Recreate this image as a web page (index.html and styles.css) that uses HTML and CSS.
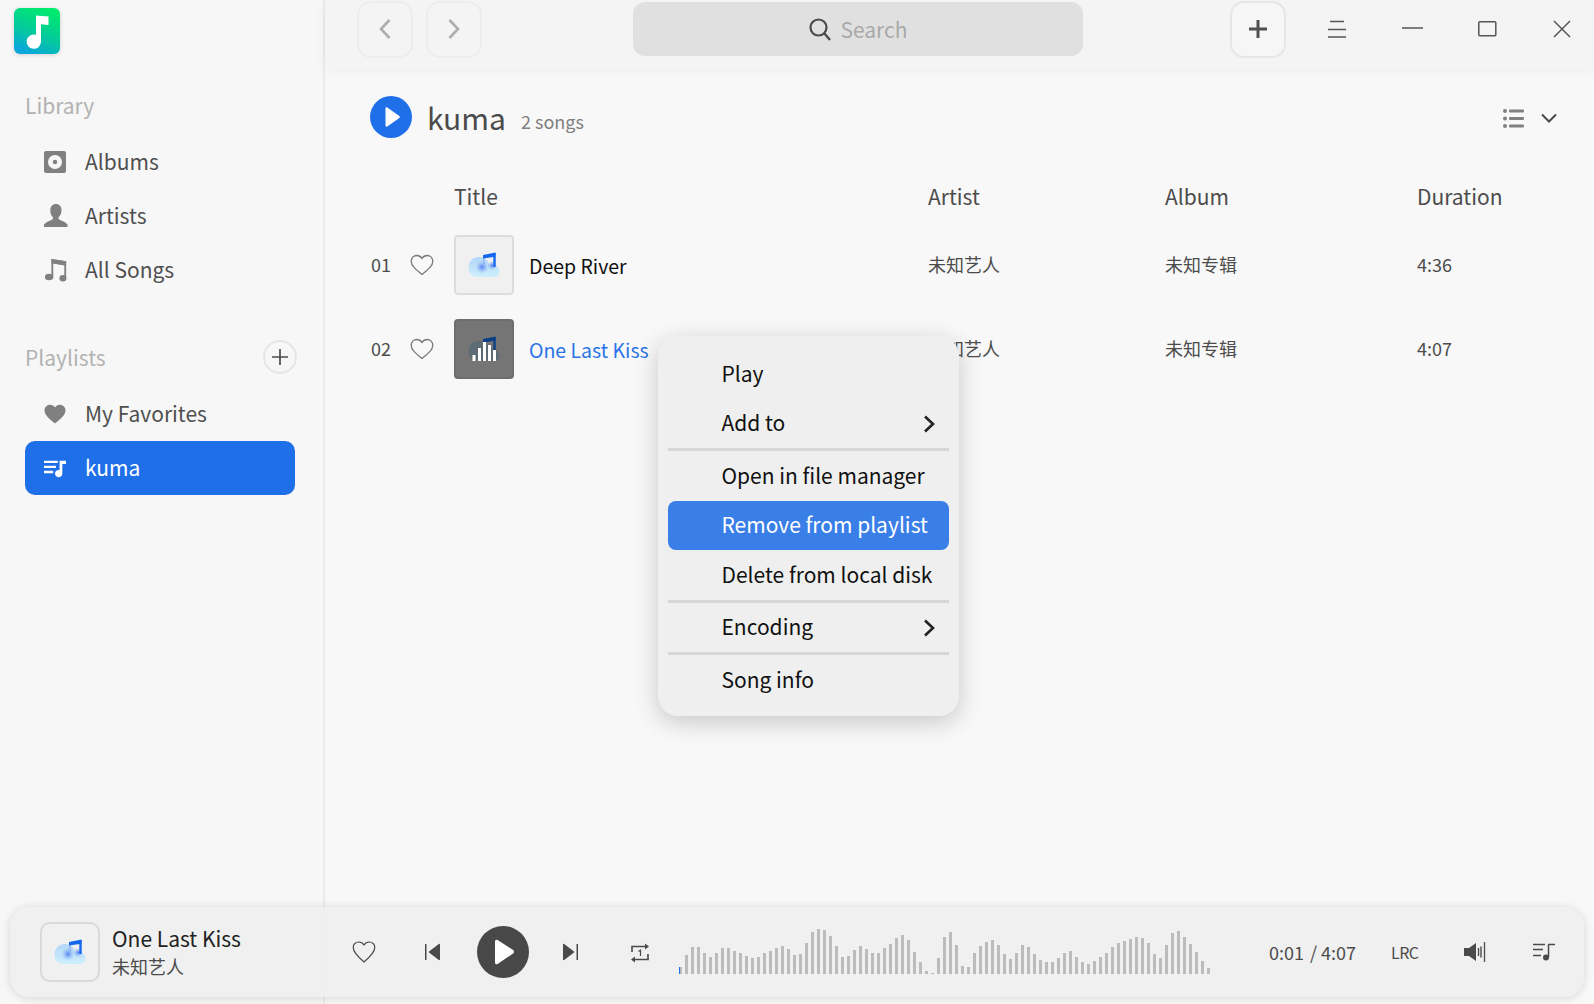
FILE: index.html
```html
<!DOCTYPE html>
<html lang="en">
<head>
<meta charset="utf-8">
<title>Music</title>
<link rel="stylesheet" href="styles.css">
</head>
<body>
<svg class="defs" width="0" height="0" aria-hidden="true">
  <defs>
    <linearGradient id="cloudFill" x1="0" y1="0" x2="0" y2="1">
      <stop offset="0" stop-color="#b4d6fa"/>
      <stop offset="1" stop-color="#cdeffb"/>
    </linearGradient>
    <radialGradient id="cloudSpot">
      <stop offset="0" stop-color="#5583f0"/>
      <stop offset=".4" stop-color="#7ba4f4" stop-opacity=".7"/>
      <stop offset="1" stop-color="#a8cdf8" stop-opacity="0"/>
    </radialGradient>
    <linearGradient id="logoFill" x1="0.75" y1="0" x2="0.35" y2="1">
      <stop offset="0" stop-color="#00ec6a"/>
      <stop offset=".6" stop-color="#04c8a0"/>
      <stop offset="1" stop-color="#0aa6dc"/>
    </linearGradient>
    <symbol id="heart" viewBox="0 0 24 22">
      <path d="M12 20.500C5 15 1.200 11.600 1.200 7.200 1.200 3.900 3.700 1.500 6.800 1.500c2.100 0 4 1.100 5.200 3 1.200-1.900 3.100-3 5.200-3 3.100 0 5.600 2.400 5.600 5.700 0 4.400-3.800 7.800-10.800 13.300z" fill="none" stroke="currentColor" stroke-width="1.300"/>
    </symbol>
    <symbol id="cloud" viewBox="0 0 32 26">
      <path d="M9 25C3.500 25 .5 20.500.5 15.500.5 9.500 5 5 11 5c5.500 0 9.500 3.500 10.500 8.500.8-.3 1.500-.5 2.500-.5 4.500 0 7.500 3 7.500 6.500 0 3.500-3 5.500-6 5.500z" fill="url(#cloudFill)"/>
      <circle cx="14" cy="15" r="7" fill="url(#cloudSpot)"/>
      <circle cx="24" cy="13.500" r="5" fill="url(#cloudSpot)"/>
      <path d="M16 4.500v8" stroke="#7fa8f0" stroke-width="1"/>
      <path d="M15 3 27.500.5v4.300L15 6.500z" fill="#1468ee"/>
      <path d="M26.500 1v14" stroke="#1468ee" stroke-width="2.400"/>
    </symbol>
  </defs>
</svg>

<div class="app">
  <aside class="sidebar">
    <svg class="logo" viewBox="0 0 46 46">
      <rect width="46" height="46" rx="6" fill="url(#logoFill)"/>
      <path d="M22 7.500 34.500 8.500V17L27 16.300V33.500A7.200 7.200 0 1 1 22 26.800z" fill="#fff"/>
    </svg>

    <div class="label label-library">Library</div>
    <nav class="nav">
      <a class="nav-item">
        <svg class="nav-icon" viewBox="0 0 22 22"><path fill-rule="evenodd" d="M2 0h18a2 2 0 0 1 2 2v18a2 2 0 0 1-2 2H2a2 2 0 0 1-2-2V2a2 2 0 0 1 2-2zm9 4a7 7 0 1 0 0 14 7 7 0 0 0 0-14zm0 4.800a2.200 2.200 0 1 1 0 4.400 2.200 2.200 0 0 1 0-4.400z" fill="#808080"/></svg>
        <span>Albums</span>
      </a>
      <a class="nav-item">
        <svg class="nav-icon nav-icon-wide" viewBox="0 0 24 24"><path d="M12 0c3.400 0 5.500 2.600 5.500 6 0 3-1 5.500-2.700 7-.6.500-.4 2 .4 2.500 2.300 1.400 6.300 2.300 8.300 5v2.500H0V20.500c2-2.700 6-3.600 8.300-5 .8-.5 1-2 .4-2.500C7 11.500 6.300 9 6.300 6 6.300 2.600 8.600 0 12 0z" fill="#808080"/></svg>
        <span>Artists</span>
      </a>
      <a class="nav-item">
        <svg class="nav-icon nav-icon-wide" viewBox="0 0 24 26"><path d="M7 1 23 3.500V21h-2V8L9 6V22H7z" fill="#808080"/><path d="M7 1 23 3.500V8L7 5.500z" fill="#808080"/><ellipse cx="4.500" cy="20.500" rx="4.500" ry="3.500" fill="#808080"/><ellipse cx="19.500" cy="22" rx="3.800" ry="3.500" fill="#808080"/></svg>
        <span>All Songs</span>
      </a>
    </nav>

    <div class="label label-playlists">
      <span>Playlists</span>
      <button class="round-add">
        <svg viewBox="0 0 16 16" width="16" height="16"><path d="M8 0v16M0 8h16" stroke="#4c4c4c" stroke-width="1.700"/></svg>
      </button>
    </div>
    <nav class="nav">
      <a class="nav-item">
        <svg class="nav-icon nav-icon-heart" viewBox="0 0 24 22"><path d="M12 21.500C4.500 15.500.5 12 .5 7 .5 3.500 3.300.8 6.700.8c2.100 0 4.100 1.100 5.300 3 1.200-1.900 3.200-3 5.300-3 3.400 0 6.200 2.700 6.200 6.200 0 5-4 8.500-11.500 14.500z" fill="#808080"/></svg>
        <span>My Favorites</span>
      </a>
      <a class="nav-item nav-item-active">
        <svg class="nav-icon" viewBox="0 0 24 22"><path d="M0 3h15v2.600H0zM0 8.500h13v2.600H0zM0 14h10v2.600H0z" fill="#fff"/><path d="M17 3h7v3.500h-4V17a4 4 0 1 1-3-3.800z" fill="#fff"/></svg>
        <span>kuma</span>
      </a>
    </nav>
  </aside>

  <main class="content">
    <header class="titlebar">
      <button class="tool-btn tool-btn-dim">
        <svg viewBox="0 0 14 24" width="14" height="24"><path d="M11.500 3 3 12l8.500 9" fill="none" stroke="#aeaeae" stroke-width="2.600"/></svg>
      </button>
      <button class="tool-btn tool-btn-dim tool-btn-next">
        <svg viewBox="0 0 14 24" width="14" height="24"><path d="M2.500 3 11 12l-8.500 9" fill="none" stroke="#aeaeae" stroke-width="2.600"/></svg>
      </button>
      <div class="search">
        <svg viewBox="0 0 24 24" width="24" height="24"><circle cx="10.500" cy="10.500" r="8" fill="none" stroke="#4a4a4a" stroke-width="2.200"/><path d="m16 16 6 7" stroke="#4a4a4a" stroke-width="2.400"/></svg>
        <span>Search</span>
      </div>
      <button class="tool-btn tool-btn-add">
        <svg viewBox="0 0 20 20" width="20" height="20"><path d="M10 1v18M1 10h18" stroke="#505050" stroke-width="3"/></svg>
      </button>
      <div class="win-btn win-menu"><svg viewBox="0 0 20 18" width="20" height="18"><path d="M3 1.500h14M1 9.500h18M1 17h18" stroke="#555" stroke-width="1.500"/></svg></div>
      <div class="win-btn win-min"><svg viewBox="0 0 22 4" width="22" height="4"><path d="M0 1h21" stroke="#555" stroke-width="1.500"/></svg></div>
      <div class="win-btn win-max"><svg viewBox="0 0 19 16" width="19" height="16"><rect x=".8" y=".8" width="17" height="14" rx="1" fill="none" stroke="#555" stroke-width="1.500"/></svg></div>
      <div class="win-btn win-close"><svg viewBox="0 0 18 18" width="18" height="18"><path d="m1 1 16 16M17 1 1 17" stroke="#555" stroke-width="1.500"/></svg></div>
    </header>

    <section class="playlist-head">
      <svg class="big-play" viewBox="0 0 42 42"><circle cx="21" cy="21" r="21" fill="#1f6fe8"/><path d="M15.500 12.500c0-1 1-1.500 1.800-1l12 8.500c.8.500.8 1.500 0 2l-12 8.500c-.8.500-1.800 0-1.800-1z" fill="#fff"/></svg>
      <h1 class="playlist-name">kuma</h1>
      <span class="playlist-count">2 songs</span>
      <svg class="view-list" viewBox="0 0 21 19"><g fill="#808080"><circle cx="2" cy="2" r="2"/><circle cx="2" cy="9.500" r="2"/><circle cx="2" cy="17" r="2"/><rect x="6" y=".5" width="15" height="3" rx="1"/><rect x="6" y="8" width="15" height="3" rx="1"/><rect x="6" y="15.500" width="15" height="3" rx="1"/></g></svg>
      <svg class="view-chevron" viewBox="0 0 16 10"><path d="m1 1.500 7 7 7-7" fill="none" stroke="#4a4a4a" stroke-width="2"/></svg>
    </section>

    <div class="track-row track-head">
      <span></span><span></span>
      <span>Title</span><span>Artist</span><span>Album</span><span>Duration</span>
    </div>

    <div class="track-row track">
      <span class="track-no">01</span>
      <svg class="track-heart"><use href="#heart"/></svg>
      <div class="track-title">
        <div class="thumb"><svg class="thumb-art"><use href="#cloud"/></svg></div>
        <span>Deep River</span>
      </div>
      <span class="track-meta">未知艺人</span>
      <span class="track-meta">未知专辑</span>
      <span class="track-meta">4:36</span>
    </div>

    <div class="track-row track">
      <span class="track-no">02</span>
      <svg class="track-heart"><use href="#heart"/></svg>
      <div class="track-title track-title-active">
        <div class="thumb thumb-playing">
          <svg class="thumb-art" viewBox="0 0 32 26">
            <path d="M9 25C3.500 25 .5 20.500.5 15.500.5 9.500 5 5 11 5c5.500 0 9.500 3.500 10.500 8.500.8-.3 1.500-.5 2.500-.5 4.500 0 7.500 3 7.500 6.500 0 3.500-3 5.500-6 5.500z" fill="#5d6b75"/>
            <path d="M15 3 27.500.5v4.300L15 6.500z" fill="#0c3f86"/><path d="M26.500 1v14" stroke="#0c3f86" stroke-width="2.400"/>
            <path d="M4.500 19h3v6h-3zM10 12h3v13h-3zM15 6h3v19h-3zM20 9h3v16h-3zM25 14h3v11h-3z" fill="#fff"/>
          </svg>
        </div>
        <span>One Last Kiss</span>
      </div>
      <span class="track-meta">未知艺人</span>
      <span class="track-meta">未知专辑</span>
      <span class="track-meta">4:07</span>
    </div>
  </main>

  <ul class="menu">
    <li class="menu-item">Play</li>
    <li class="menu-item">Add to
      <svg class="menu-arrow" viewBox="0 0 12 18"><path d="m2 1.500 8 7.500-8 7.500" fill="none" stroke="#222" stroke-width="2.600"/></svg>
    </li>
    <li class="menu-sep"></li>
    <li class="menu-item">Open in file manager</li>
    <li class="menu-item menu-item-active">Remove from playlist</li>
    <li class="menu-item">Delete from local disk</li>
    <li class="menu-sep"></li>
    <li class="menu-item">Encoding
      <svg class="menu-arrow" viewBox="0 0 12 18"><path d="m2 1.500 8 7.500-8 7.500" fill="none" stroke="#222" stroke-width="2.600"/></svg>
    </li>
    <li class="menu-sep"></li>
    <li class="menu-item">Song info</li>
  </ul>

  <footer class="player">
    <div class="now">
      <div class="now-cover"><svg class="now-art"><use href="#cloud"/></svg></div>
      <div class="now-text">
        <div class="now-title">One Last Kiss</div>
        <div class="now-artist">未知艺人</div>
      </div>
    </div>
    <svg class="ctl ctl-heart" viewBox="0 0 24 24"><path d="M12 22C5 16 1.200 12 1.200 7.500 1.200 4.300 3.700 2 6.800 2c2.100 0 4 1.100 5.200 3 1.200-1.900 3.100-3 5.200-3 3.100 0 5.600 2.300 5.600 5.500C22.800 12 19 16 12 22z" fill="none" stroke="#4a4a4a" stroke-width="1.200"/></svg>
    <svg class="ctl ctl-prev" viewBox="0 0 16 18"><path d="M0 1h1.500v16H0z" fill="#4a4a4a"/><path d="M15 1.500v15c0 .6-.7 1-1.200.6L4 9.600c-.4-.3-.4-.9 0-1.200L13.800.9c.5-.4 1.200 0 1.200.6z" fill="#4a4a4a"/></svg>
    <svg class="ctl-play" viewBox="0 0 52 52"><circle cx="26" cy="26" r="26" fill="#484848"/><path d="M18 15.500c0-1.500 1.300-2.300 2.600-1.500l15.500 10c1.200.8 1.200 2.700 0 3.500L20.600 38c-1.300.8-2.600 0-2.600-1.500z" fill="#fff"/></svg>
    <svg class="ctl ctl-next" viewBox="0 0 16 18"><path d="M14.500 1H16v16h-1.500z" fill="#4a4a4a"/><path d="M1 1.500v15c0 .6.700 1 1.200.6L12 9.600c.4-.3.4-.9 0-1.200L2.200.9C1.700.5 1 .9 1 1.500z" fill="#4a4a4a"/></svg>
    <div class="ctl ctl-repeat">
      <svg viewBox="0 0 22 22" width="22" height="22"><path d="M3 10V4.500h14M19 12v5.500H5" fill="none" stroke="#4a4a4a" stroke-width="1.600"/><path d="m16 1.500 4 3-4 3zM6 14.500l-4 3 4 3z" fill="#4a4a4a"/><path d="M9.500 9.500l2-1.300V14" fill="none" stroke="#4a4a4a" stroke-width="1.200"/></svg>
    </div>
    <div class="wave">
      <i class="bar bar-played" style="height:7px"></i><i class="bar" style="height:19px"></i><i class="bar" style="height:27px"></i><i class="bar" style="height:27px"></i><i class="bar" style="height:21px"></i><i class="bar" style="height:17px"></i><i class="bar" style="height:21px"></i><i class="bar" style="height:26px"></i><i class="bar" style="height:26px"></i><i class="bar" style="height:23px"></i><i class="bar" style="height:21px"></i><i class="bar" style="height:18px"></i><i class="bar" style="height:16px"></i><i class="bar" style="height:17px"></i><i class="bar" style="height:21px"></i><i class="bar" style="height:23px"></i><i class="bar" style="height:26px"></i><i class="bar" style="height:28px"></i><i class="bar" style="height:25px"></i><i class="bar" style="height:19px"></i><i class="bar" style="height:20px"></i><i class="bar" style="height:31px"></i><i class="bar" style="height:42px"></i><i class="bar" style="height:45px"></i><i class="bar" style="height:44px"></i><i class="bar" style="height:38px"></i><i class="bar" style="height:28px"></i><i class="bar" style="height:17px"></i><i class="bar" style="height:18px"></i><i class="bar" style="height:24px"></i><i class="bar" style="height:28px"></i><i class="bar" style="height:25px"></i><i class="bar" style="height:21px"></i><i class="bar" style="height:21px"></i><i class="bar" style="height:26px"></i><i class="bar" style="height:30px"></i><i class="bar" style="height:36px"></i><i class="bar" style="height:39px"></i><i class="bar" style="height:34px"></i><i class="bar" style="height:22px"></i><i class="bar" style="height:12px"></i><i class="bar" style="height:3px"></i><i class="bar" style="height:1px"></i><i class="bar" style="height:16px"></i><i class="bar" style="height:37px"></i><i class="bar" style="height:42px"></i><i class="bar" style="height:29px"></i><i class="bar" style="height:8px"></i><i class="bar" style="height:7px"></i><i class="bar" style="height:21px"></i><i class="bar" style="height:28px"></i><i class="bar" style="height:32px"></i><i class="bar" style="height:34px"></i><i class="bar" style="height:29px"></i><i class="bar" style="height:20px"></i><i class="bar" style="height:15px"></i><i class="bar" style="height:21px"></i><i class="bar" style="height:29px"></i><i class="bar" style="height:27px"></i><i class="bar" style="height:20px"></i><i class="bar" style="height:14px"></i><i class="bar" style="height:12px"></i><i class="bar" style="height:12px"></i><i class="bar" style="height:16px"></i><i class="bar" style="height:21px"></i><i class="bar" style="height:23px"></i><i class="bar" style="height:17px"></i><i class="bar" style="height:12px"></i><i class="bar" style="height:10px"></i><i class="bar" style="height:13px"></i><i class="bar" style="height:17px"></i><i class="bar" style="height:21px"></i><i class="bar" style="height:27px"></i><i class="bar" style="height:31px"></i><i class="bar" style="height:33px"></i><i class="bar" style="height:35px"></i><i class="bar" style="height:37px"></i><i class="bar" style="height:36px"></i><i class="bar" style="height:31px"></i><i class="bar" style="height:20px"></i><i class="bar" style="height:16px"></i><i class="bar" style="height:29px"></i><i class="bar" style="height:41px"></i><i class="bar" style="height:43px"></i><i class="bar" style="height:37px"></i><i class="bar" style="height:30px"></i><i class="bar" style="height:22px"></i><i class="bar" style="height:13px"></i><i class="bar" style="height:6px"></i>
    </div>
    <div class="time">0:01 <span class="time-sep">/</span> 4:07</div>
    <div class="lrc">LRC</div>
    <svg class="ctl ctl-vol" viewBox="0 0 22 20"><path d="M0 6h5l7-5v18l-7-5H0z" fill="#4a4a4a"/><path d="M14.500 6v8M17 4.500v11" stroke="#4a4a4a" stroke-width="1.400"/><path d="M20.500 0v20" stroke="#4a4a4a" stroke-width="1.300"/></svg>
    <svg class="ctl ctl-queue" viewBox="0 0 22 18"><path d="M0 1.500h12M0 6.500h10M0 12.500h8" stroke="#4a4a4a" stroke-width="1.500"/><path d="M15.500 1.500V14M15 1.500h7" fill="none" stroke="#4a4a4a" stroke-width="1.500"/><circle cx="13" cy="14.500" r="3" fill="#4a4a4a"/></svg>
  </footer>
</div>
</body>
</html>
```

FILE: styles.css
```css
* { box-sizing: border-box; }

html, body {
  margin: 0;
  height: 100%;
  overflow: hidden;
}

body {
  font-family: "Noto Sans CJK SC", "Noto Sans", sans-serif;
  font-size: 21px;
  color: #4c4c4c;
  background: #f8f8f8;
}

.defs { position: absolute; }

.app {
  position: relative;
  display: flex;
  width: 1594px;
  height: 1004px;
  overflow: hidden;
}

/* Sidebar */
.sidebar {
  flex: 0 0 325px;
  height: 100%;
  background: #f7f7f7;
  border-right: 2px solid #ebebeb;
  padding: 8px 0 0 25px;
}

.logo {
  display: block;
  width: 46px;
  height: 46px;
  margin-left: -11px;
  filter: drop-shadow(0 1px 2px rgba(0,0,0,.15));
}

.label {
  display: flex;
  align-items: center;
  height: 36px;
  font-size: 21px;
  color: #b2b2b2;
  width: 272px;
  justify-content: space-between;
  padding-bottom: 2px;
}

.label-library { margin-top: 34px; }
.label-playlists { margin-top: 43px; }

.round-add {
  display: flex;
  align-items: center;
  justify-content: center;
  width: 34px;
  height: 34px;
  padding: 0;
  margin-left: 1px;
  border: 2px solid #e6e6e6;
  border-radius: 50%;
  background: transparent;
}

.nav { margin-top: 11px; width: 270px; }

.nav-item {
  display: flex;
  align-items: center;
  gap: 19px;
  height: 54px;
  padding-left: 19px;
  border-radius: 10px;
  font-size: 21px;
  color: #4f4f4f;
}

.nav-item span { padding-bottom: 2px; }

.nav-icon {
  flex: none;
  width: 22px;
  height: 24px;
}

.nav-icon-wide {
  width: 24px;
  margin-right: -2px;
}

.nav-icon-heart { height: 20px; }

.nav-item-active {
  background: #1f6fe8;
  color: #fff;
}

/* Title bar */
.content {
  flex: 1;
  min-width: 0;
}

.titlebar {
  display: flex;
  align-items: center;
  height: 68px;
  padding: 0 0 10px 32px;
  background: #f4f4f4;
  box-shadow: 0 2px 12px rgba(0,0,0,.05);
  position: relative;
}

.tool-btn {
  display: flex;
  align-items: center;
  justify-content: center;
  width: 56px;
  height: 57px;
  padding: 0;
  border-radius: 14px;
  background: #f6f6f6;
  border: 2px solid #e6e6e6;
}

.tool-btn-dim {
  background: transparent;
  border-color: #ededed;
}

.tool-btn-next { margin-left: 13px; }

.search {
  display: flex;
  align-items: center;
  justify-content: center;
  gap: 8px;
  width: 450px;
  height: 54px;
  margin-left: 151px;
  border-radius: 12px;
  background: #e0e0e0;
  color: #a9a9a9;
  font-size: 21px;
}

.tool-btn-add { margin-left: 147px; }

.win-btn {
  display: flex;
  align-items: center;
  justify-content: center;
  width: 30px;
  height: 30px;
}

.win-menu { margin-left: 36px; }
.win-min { margin-left: 46px; }
.win-max { margin-left: 44px; }
.win-close { margin-left: 45px; }

/* Playlist header */
.playlist-head {
  display: flex;
  align-items: center;
  height: 60px;
  margin-top: 19px;
  padding-left: 45px;
}

.big-play {
  width: 42px;
  height: 42px;
  flex: none;
}

.playlist-name {
  margin: 0 0 0 15px;
  font-size: 30px;
  font-weight: 400;
  color: #4a4a4a;
  line-height: 46px;
}

.playlist-count {
  margin-left: 15px;
  padding-top: 7px;
  font-size: 18px;
  color: #808080;
}

.view-list {
  width: 21px;
  height: 19px;
  margin: 2px 0 0 auto;
}

.view-chevron {
  width: 16px;
  height: 10px;
  margin: 2px 37px 0 17px;
}

/* Tracks */
.track-row {
  display: grid;
  grid-template-columns: 39px 44px 474px 237px 252px 1fr;
  align-items: center;
  padding-left: 46px;
}

.track-head {
  height: 40px;
  margin-top: 29px;
  font-size: 21px;
  color: #4c4c4c;
}

.track {
  height: 84px;
}

.track-head + .track { margin-top: 7px; }

.track-no {
  font-size: 18px;
  color: #4c4c4c;
  padding-bottom: 2px;
}

.track-heart {
  width: 24px;
  height: 22px;
  color: #7a7a7a;
}

.track-title {
  display: flex;
  align-items: center;
  gap: 15px;
  color: #111;
  font-size: 19.500px;
}

.track-title-active { color: #2a74e8; }

.thumb {
  display: flex;
  align-items: center;
  justify-content: center;
  width: 60px;
  height: 60px;
  border: 2px solid #dcdcdc;
  border-radius: 4px;
  background: #f0f0f0;
}

.thumb-playing {
  background: #757575;
  border-color: #6e6e6e;
}

.thumb-art {
  width: 32px;
  height: 26px;
}

.track-meta {
  font-size: 18px;
  color: #4c4c4c;
  padding-bottom: 2px;
}

/* Context menu */
.menu {
  position: absolute;
  left: 658px;
  top: 336px;
  width: 301px;
  margin: 0;
  padding: 13px 10px 11.500px;
  list-style: none;
  background: #efefef;
  border-radius: 20px;
  box-shadow: 0 6px 24px rgba(0,0,0,.2);
  font-size: 21px;
  color: #111;
}

.menu-item {
  display: flex;
  align-items: center;
  justify-content: space-between;
  height: 49.500px;
  padding: 0 14px 2px 53.500px;
  border-radius: 8px;
  white-space: nowrap;
}

.menu-item-active {
  background: #3a7ee8;
  color: #fff;
}

.menu-sep {
  height: 3px;
  background: #d6d6d6;
}

.menu-arrow {
  width: 12px;
  height: 18px;
  margin-top: 4px;
}

/* Player */
.player {
  position: absolute;
  left: 10px;
  right: 10px;
  bottom: 7px;
  height: 90px;
  display: flex;
  align-items: center;
  padding-left: 30px;
  border-radius: 20px;
  background: rgba(239,239,239,.94);
  box-shadow: 0 1px 10px rgba(0,0,0,.14);
}

.now {
  display: flex;
  align-items: center;
  gap: 12px;
  flex: 0 0 309px;
}

.now-cover {
  display: flex;
  align-items: center;
  justify-content: center;
  width: 60px;
  height: 60px;
  border: 2px solid #dadada;
  border-radius: 10px;
}

.now-art { width: 32px; height: 26px; }

.now-title {
  font-size: 21px;
  line-height: 28px;
  color: #222;
}

.now-artist {
  font-size: 18px;
  line-height: 28px;
  color: #4c4c4c;
}

.ctl { flex: none; display: block; }

.ctl-heart { width: 24px; height: 24px; margin-left: 3px; }
.ctl-prev { width: 16px; height: 18px; margin-left: 49px; }
.ctl-play { width: 52px; height: 52px; flex: none; margin-left: 36px; }
.ctl-next { width: 16px; height: 18px; margin-left: 33px; }
.ctl-repeat { width: 22px; height: 22px; margin: 0 0 2px 51px; }

.wave {
  display: flex;
  align-items: flex-end;
  gap: 3px;
  height: 46px;
  margin: 0 0 2px 28px;
  flex: none;
}

.bar {
  display: block;
  width: 3px;
  background: #bcbcbc;
}

.bar-played {
  background: linear-gradient(to right, #1f6fe8 50%, #bcbcbc 50%);
}

.time {
  flex: none;
  margin-left: 59px;
  font-size: 18px;
  color: #4c4c4c;
  white-space: nowrap;
  width: 90px;
}

.time-sep { margin: 0 0 0 2px; }

.lrc {
  flex: none;
  margin-left: 32px;
  width: 27px;
  font-size: 16px;
  color: #4c4c4c;
  letter-spacing: -.5px;
}

.ctl-vol { width: 22px; height: 20px; margin-left: 46px; }
.ctl-queue { width: 22px; height: 18px; margin-left: 47px; }
```
